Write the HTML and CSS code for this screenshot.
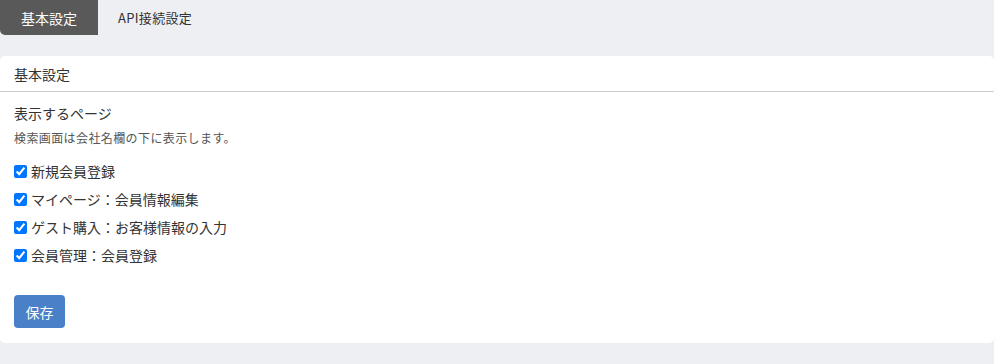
FILE: index.html
```html
<!DOCTYPE html>
<html lang="ja">
<head>
<meta charset="utf-8">
<link rel="stylesheet" href="styles.css">
</head>
<body>
<div class="tabs">
  <div class="tab active">基本設定</div>
  <div class="tab">API接続設定</div>
</div>
<div class="card">
  <div class="card-header">基本設定</div>
  <div class="card-body">
    <div class="section-title">表示するページ</div>
    <div class="note">検索画面は会社名欄の下に表示します。</div>
    <ul class="checks">
      <li><label><input type="checkbox" checked> 新規会員登録</label></li>
      <li><label><input type="checkbox" checked> マイページ：会員情報編集</label></li>
      <li><label><input type="checkbox" checked> ゲスト購入：お客様情報の入力</label></li>
      <li><label><input type="checkbox" checked> 会員管理：会員登録</label></li>
    </ul>
    <button class="btn">保存</button>
  </div>
</div>
</body>
</html>
```

FILE: styles.css
```css
* { box-sizing: border-box; }
html, body { margin: 0; padding: 0; }
body {
  background: #eeeff3;
  font-family: "Noto Sans CJK JP", "Noto Sans", sans-serif;
  color: #333;
  width: 994px;
  height: 364px;
}
.tabs {
  display: flex;
  height: 35px;
}
.tab {
  height: 35px;
  display: flex;
  align-items: center;
  padding: 0 20px;
  font-size: 13px;
  letter-spacing: 0.3px;
  color: #333;
}
.tab.active {
  width: 98px;
  justify-content: center;
  padding: 0;
  background: #595959;
  color: #fff;
  font-size: 14px;
  letter-spacing: 0;
  border-radius: 0 0 0 5px;
}
.card {
  margin-top: 21px;
  background: #fff;
  border-radius: 5px;
  height: 287px;
}
.card-header {
  height: 36px;
  padding: 0 14px;
  display: flex;
  align-items: center;
  font-size: 14px;
  border-bottom: 1px solid #cccccc;
}
.card-body {
  padding: 10px 14px;
}
.section-title {
  font-size: 14px;
  line-height: 22px;
}
.note {
  font-size: 12px;
  letter-spacing: 0.4px;
  color: #555;
  line-height: 18px;
  margin-top: 5px;
}
.checks {
  list-style: none;
  margin: 10px 0 0;
  padding: 0;
}
.checks li {
  height: 28px;
  display: flex;
  align-items: center;
}
.checks label {
  display: flex;
  align-items: center;
  font-size: 14px;
}
.checks input {
  margin: 0 4px 0 0;
  width: 13px;
  height: 13px;
  accent-color: #0075ff;
}
.btn {
  margin-top: 26px;
  width: 51px;
  height: 33px;
  border: none;
  border-radius: 4px;
  background: #4a80c7;
  color: #fff;
  font-family: inherit;
  font-size: 14px;
  padding: 0;
  display: block;
}
```
